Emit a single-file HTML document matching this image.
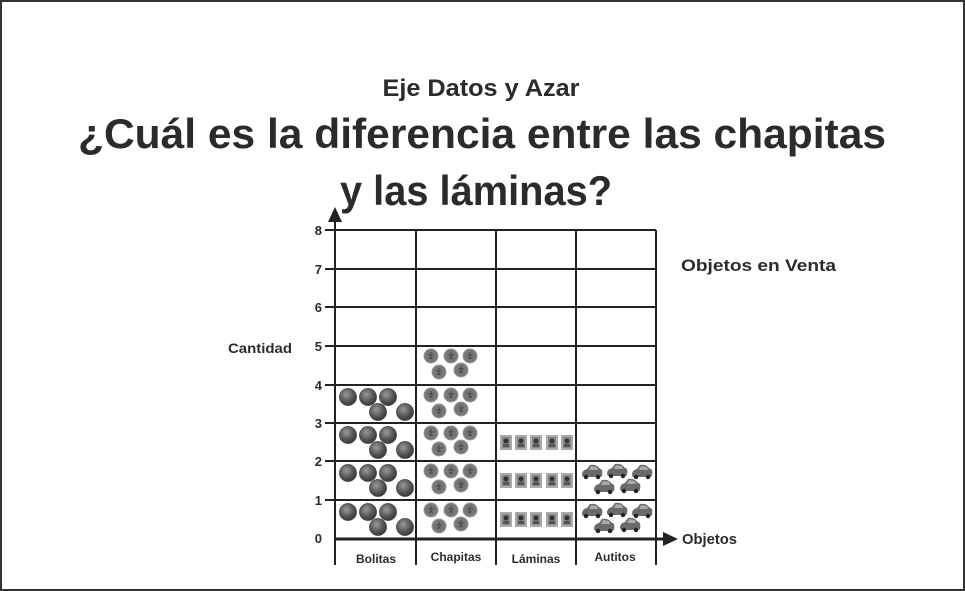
<!DOCTYPE html>
<html><head><meta charset="utf-8"><style>
html,body{margin:0;padding:0;background:#fff}
svg{display:block}
text{font-family:"Liberation Sans",sans-serif;font-weight:bold;fill:#2b2b2b}
</style></head><body>
<svg width="965" height="591" viewBox="0 0 965 591" xmlns="http://www.w3.org/2000/svg">
<defs>
<radialGradient id="bg" cx="0.4" cy="0.35" r="0.7"><stop offset="0" stop-color="#9a9a9a"/><stop offset="0.6" stop-color="#555"/><stop offset="1" stop-color="#333"/></radialGradient>
<g id="bol"><circle r="8.5" fill="url(#bg)"/><circle r="8.5" fill="none" stroke="#444" stroke-width="0.8"/></g>
<g id="cha"><circle r="7" fill="#777"/><circle r="7" fill="none" stroke="#999" stroke-width="1"/><path d="M-3 -1h6M-2 2h4M0 -4v7" stroke="#444" stroke-width="1"/></g>
<g id="lam"><rect x="0" y="0" width="12" height="15" fill="#aaa"/><rect x="2" y="2" width="8" height="11" fill="#888"/><circle cx="6" cy="6" r="2.5" fill="#333"/><rect x="3" y="9" width="6" height="3" fill="#555"/></g>
<g id="car"><path d="M-10 2 Q-10 -3 -5 -4 L-2 -8 Q4 -9 7 -5 L10 -3 Q11 2 9 4 L-9 4 Z" fill="#6a6a6a"/><path d="M-1 -7 L5 -6 L6 -3 L-3 -3 Z" fill="#aaa"/><circle cx="-6" cy="4" r="2.2" fill="#222"/><circle cx="6" cy="4" r="2.2" fill="#222"/></g>
<g id="rowB"><use href="#bol" x="348" y="12"/><use href="#bol" x="368" y="12"/><use href="#bol" x="388" y="12"/><use href="#bol" x="378" y="27"/><use href="#bol" x="405" y="27"/></g>
<g id="rowC"><use href="#cha" x="431" y="10"/><use href="#cha" x="451" y="10"/><use href="#cha" x="470" y="10"/><use href="#cha" x="439" y="26"/><use href="#cha" x="461" y="24"/></g>
<g id="rowL"><use href="#lam" x="500" y="12"/><use href="#lam" x="515" y="12"/><use href="#lam" x="530" y="12"/><use href="#lam" x="546" y="12"/><use href="#lam" x="561" y="12"/></g>
<g id="rowA"><use href="#car" x="592" y="12"/><use href="#car" x="617" y="11"/><use href="#car" x="642" y="12"/><use href="#car" x="604" y="27"/><use href="#car" x="630" y="26"/></g>
</defs>
<rect x="1" y="1" width="963" height="589" fill="#fff" stroke="#333" stroke-width="2"/>
<text x="481" y="96" font-size="24" text-anchor="middle" textLength="197" lengthAdjust="spacingAndGlyphs">Eje Datos y Azar</text>
<text x="482" y="148" font-size="42" text-anchor="middle" textLength="808" lengthAdjust="spacingAndGlyphs">¿Cuál es la diferencia entre las chapitas</text>
<text x="476" y="205" font-size="42" text-anchor="middle" textLength="272" lengthAdjust="spacingAndGlyphs">y las láminas?</text>
<g stroke="#222" stroke-width="2">
<line x1="325" y1="230" x2="656" y2="230"/><line x1="325" y1="269" x2="656" y2="269"/><line x1="325" y1="307" x2="656" y2="307"/><line x1="325" y1="346" x2="656" y2="346"/><line x1="325" y1="385" x2="656" y2="385"/><line x1="325" y1="423" x2="656" y2="423"/><line x1="325" y1="461" x2="656" y2="461"/><line x1="325" y1="500" x2="656" y2="500"/>
<line x1="335" y1="218" x2="335" y2="565"/><line x1="416" y1="230" x2="416" y2="565"/><line x1="496" y1="230" x2="496" y2="565"/><line x1="576" y1="230" x2="576" y2="565"/><line x1="656" y1="230" x2="656" y2="565"/>
<line x1="335" y1="539" x2="665" y2="539" stroke-width="3"/>
</g>
<path d="M335 207 L342 222 L328 222 Z" fill="#222"/>
<path d="M678 539 L663 532 L663 546 Z" fill="#222"/>
<g font-size="13" text-anchor="end">
<text x="322" y="235">8</text><text x="322" y="274">7</text><text x="322" y="312">6</text><text x="322" y="351">5</text><text x="322" y="390">4</text><text x="322" y="428">3</text><text x="322" y="466">2</text><text x="322" y="505">1</text><text x="322" y="543">0</text>
</g>
<text x="228" y="353" font-size="14" textLength="64" lengthAdjust="spacingAndGlyphs">Cantidad</text>
<text x="681" y="271" font-size="17" textLength="155" lengthAdjust="spacingAndGlyphs">Objetos en Venta</text>
<text x="682" y="544" font-size="15" textLength="55" lengthAdjust="spacingAndGlyphs">Objetos</text>
<g font-size="12" text-anchor="middle">
<text x="376" y="563">Bolitas</text><text x="456" y="561">Chapitas</text><text x="536" y="563">Láminas</text><text x="615" y="561">Autitos</text>
</g>
<use href="#rowB" y="500"/><use href="#rowB" y="461"/><use href="#rowB" y="423"/><use href="#rowB" y="385"/>
<use href="#rowC" y="500"/><use href="#rowC" y="461"/><use href="#rowC" y="423"/><use href="#rowC" y="385"/><use href="#rowC" y="346"/>
<use href="#rowL" y="500"/><use href="#rowL" y="461"/><use href="#rowL" y="423"/>
<use href="#rowA" y="500"/><use href="#rowA" y="461"/>
</svg>
</body></html>
